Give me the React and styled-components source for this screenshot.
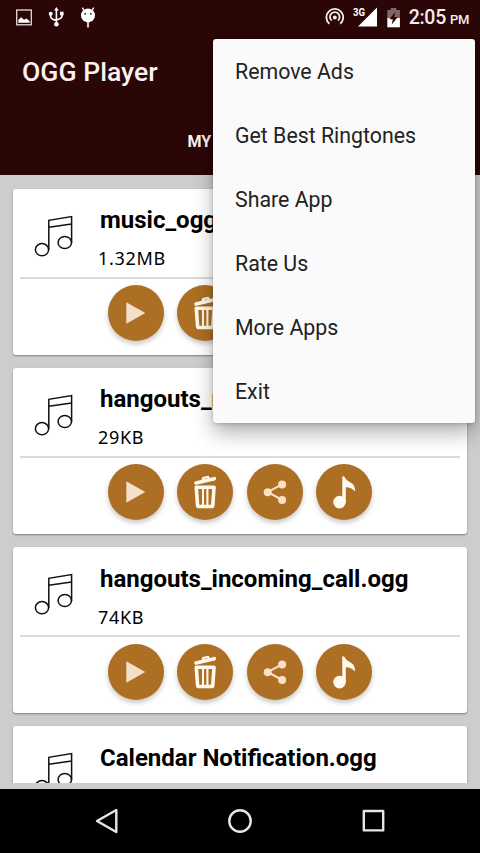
import React from "react";
import styled, { createGlobalStyle } from "styled-components";

const GlobalStyle = createGlobalStyle`
    * {
        box-sizing: border-box;
    }
    body {
        margin: 0;
        background-color: black;
        font-family: Roboto, "Liberation Sans", sans-serif;
    }
    svg {
        display: block;
        flex-shrink: 0;
    }
`;
const Container = styled.div`
    position: relative;
    display: flex;
    flex-direction: column;
    width: 480px;
    height: 853px;
    overflow: hidden;
    background-color: #cdcdcd;
`;
const StatusBar = styled.div`
    display: flex;
    align-items: center;
    height: 34px;
    padding: 0 11px 0 16px;
    background-color: #2b0607;
    color: #f6eded;
`;
const StatusIcons = styled.div`
    display: flex;
    align-items: center;
    gap: ${(props) => props.$gap}px;
    & + & {
        margin-left: auto;
    }
`;
const Clock = styled.div`
    display: flex;
    align-items: baseline;
    padding-top: 4px;
    font-size: 19.5px;
    font-weight: 500;
    letter-spacing: -0.3px;
    line-height: 30px;
    white-space: nowrap;
    span {
        margin-left: 4px;
        font-size: 13px;
    }
`;
const Header = styled.div`
    height: 74px;
    padding: 22px 22px 0;
    background-color: #2b0607;
    border-bottom: 1px solid #260405;
    color: #fbf1f0;
    font-size: 26.6px;
    font-weight: 500;
    line-height: 32px;
`;
const TabBar = styled.div`
    height: 67px;
    padding: 24px 0 0 187.5px;
    background-color: #2b0607;
    color: #fbf1f0;
    font-size: 16px;
    font-weight: 700;
    line-height: 20px;
`;
const List = styled.div`
    display: flex;
    flex-direction: column;
    gap: 13.3px;
    height: 607.5px;
    padding: 13.6px 13px 0;
    overflow: hidden;
`;
const Card = styled.div`
    flex-shrink: 0;
    height: 166px;
    padding: 0 7px;
    border-radius: 3px;
    background-color: white;
    box-shadow: 0 1px 2px rgba(0, 0, 0, 0.38);
`;
const Info = styled.div`
    display: flex;
    height: 90px;
    border-bottom: 2px solid #dadada;
    padding-left: 14px;
    svg {
        margin-top: 25px;
    }
`;
const Texts = styled.div`
    padding: 16.4px 0 0 22px;
    color: black;
`;
const FileName = styled.div`
    padding-left: 2px;
    font-size: 24px;
    font-weight: 700;
    line-height: 30px;
    white-space: nowrap;
`;
const FileSize = styled.div`
    margin-top: 10px;
    font-family: "Noto Sans", sans-serif;
    font-size: 18px;
    letter-spacing: 0.7px;
    line-height: 26px;
`;
const Actions = styled.div`
    display: flex;
    gap: 13.4px;
    padding: 6.5px 0 0 88px;
`;
const RoundButton = styled.button`
    display: flex;
    align-items: center;
    justify-content: center;
    width: 56px;
    height: 56px;
    padding: 0;
    border: none;
    border-radius: 50%;
    background-color: #ac6f23;
    box-shadow: 0 3px 5px rgba(0, 0, 0, 0.22);
`;
const NavBar = styled.div`
    display: flex;
    align-items: center;
    justify-content: space-between;
    height: 64px;
    margin-top: auto;
    padding: 0 94px;
    background-color: black;
`;
const Menu = styled.div`
    position: absolute;
    top: 39px;
    right: 5.5px;
    width: 261.5px;
    border-radius: 3px;
    background-color: #fafafa;
    box-shadow: 0 10px 20px rgba(0, 0, 0, 0.3), 0 1px 4px rgba(0, 0, 0, 0.2);
`;
const MenuItem = styled.div`
    height: 64px;
    padding-left: 22px;
    color: #222222;
    font-size: 21.33px;
    line-height: 65px;
    &:last-child {
        height: 63.5px;
    }
`;

const MusicIcon = () => (
    <svg width="42" height="46" viewBox="0 0 42 46" fill="none" stroke="#111" strokeWidth="1.5">
        <ellipse cx="8" cy="35.7" rx="6.6" ry="6.1" />
        <ellipse cx="30.8" cy="28.5" rx="6.7" ry="6.1" />
        <path d="M14.8 36V6.3L37.6 2.6V29M14.8 13.3L37.6 10" />
    </svg>
);
const PlayIcon = () => (
    <svg width="56" height="56" viewBox="0 0 56 56" fill="#f4dfcb">
        <path d="M18.3 17.3V38.8L37.3 28z" />
    </svg>
);
const TrashIcon = () => (
    <svg width="56" height="56" viewBox="0 0 56 56" fill="none" stroke="#fff8ec">
        <path d="M19 19L37.3 14.7" strokeWidth="3.6" strokeLinecap="round" />
        <path d="M25.5 16.2L26.3 14L31 13L32 14.6" strokeWidth="2.2" />
        <path d="M19.3 23.3H37L35.8 41.3Q35.7 42.5 34.4 42.5H22Q20.7 42.5 20.6 41.3z" strokeWidth="3.6" strokeLinejoin="round" />
        <path d="M26 25V41.5M30.4 25V41.5" strokeWidth="2.1" />
    </svg>
);
const ShareIcon = () => (
    <svg width="56" height="56" viewBox="0 0 56 56" fill="#fae0c4" stroke="#fae0c4">
        <path d="M35.2 20.3L20.6 28L35.2 36" fill="none" strokeWidth="2" />
        <g stroke="none">
            <circle cx="35.1" cy="20.4" r="4" />
            <circle cx="20.7" cy="28.2" r="4" />
            <circle cx="35.1" cy="36" r="4" />
        </g>
    </svg>
);
const NoteIcon = () => (
    <svg width="56" height="56" viewBox="0 0 56 56" fill="#fffaf0">
        <circle cx="23.5" cy="38.1" r="6.3" />
        <path d="M26.3 12.2Q28.7 12 29.3 14.2Q30.2 16.5 34.5 18.4Q39.8 21.2 38.8 27.4Q34.7 23 29.8 23.4V38.5H26.3z" />
    </svg>
);

const files = [
    { name: "music_ogg.ogg", size: "1.32MB" },
    { name: "hangouts_message.ogg", size: "29KB" },
    { name: "hangouts_incoming_call.ogg", size: "74KB" },
    { name: "Calendar Notification.ogg" },
];
const menuItems = ["Remove Ads", "Get Best Ringtones", "Share App", "Rate Us", "More Apps", "Exit"];

function App() {
    return (
        <Container>
            <GlobalStyle />
            <StatusBar>
                <StatusIcons $gap={16}>
                    <svg width="16" height="17" viewBox="0 0 16 17">
                        <rect x="0.7" y="1" width="14.6" height="14.8" fill="none" stroke="#e9dada" strokeWidth="1.3" />
                        <path d="M2.3 13.8V10.8L5.3 8.2L8 10.8L10.5 9.4L13.7 12.3V13.8z" fill="white" />
                    </svg>
                    <svg width="16" height="22" viewBox="0 0 16 22" fill="#fff" stroke="#fff">
                        <path d="M8.4 3V18M2.6 8V10.5Q2.6 13.2 8.4 14.4M14 7.5V10Q14 12.4 8.4 14" fill="none" strokeWidth="1.6" />
                        <path d="M8.4 1L10.7 4.5H6.1z" stroke="none" />
                        <circle cx="8.4" cy="18.3" r="2.3" stroke="none" />
                        <circle cx="2.7" cy="7.8" r="2" stroke="none" />
                        <rect x="12" y="5.7" width="3.6" height="3.6" stroke="none" />
                    </svg>
                    <svg width="16" height="22" viewBox="0 0 16 22">
                        <circle cx="8" cy="9.4" r="7" fill="white" />
                        <path d="M3.7 4L2.4 1.7M12.3 4L13.7 1.7" stroke="white" strokeWidth="1.4" />
                        <path d="M8 16V21.5" stroke="#dac5c5" strokeWidth="2.2" />
                        <circle cx="5.1" cy="7.8" r="0.9" fill="#2b0607" />
                        <circle cx="10.9" cy="7.8" r="0.9" fill="#2b0607" />
                    </svg>
                </StatusIcons>
                <StatusIcons $gap={9}>
                    <svg width="20" height="20" viewBox="-0.8 0 20 20" fill="none" stroke="#f6eded" strokeWidth="1.8">
                        <path d="M4.6 16.8A8.4 8.4 0 1 1 15.4 16.8" />
                        <path d="M6.9 13.6A4.8 4.8 0 1 1 13.1 13.6" />
                        <circle cx="10" cy="10.5" r="2" fill="#f6eded" stroke="none" />
                    </svg>
                    <svg width="24" height="26" viewBox="0 0 24 26" fill="#fff">
                        <text x="0" y="12" fontSize="11.5" fontWeight="700" textLength="12" lengthAdjust="spacingAndGlyphs">3G</text>
                        <path d="M24 3.5V22.4H5z" />
                    </svg>
                    <svg width="14" height="21" viewBox="0.2 0 14 21">
                        <path d="M1.5 3H5V1H10.5V3H14.1V11H1.5z" fill="#806668" />
                        <path d="M1.5 11H14.1V20.3H1.5z" fill="white" />
                        <path d="M9.5 5L3.5 12.3H7L5.9 17.5L12 10H8.5z" fill="#2b0607" />
                    </svg>
                    <Clock>2:05<span>PM</span></Clock>
                </StatusIcons>
            </StatusBar>
            <Header>OGG Player</Header>
            <TabBar>MY</TabBar>
            <List>
                {files.map((file) => (
                    <Card key={file.name}>
                        <Info>
                            <MusicIcon />
                            <Texts>
                                <FileName>{file.name}</FileName>
                                {file.size && <FileSize>{file.size}</FileSize>}
                            </Texts>
                        </Info>
                        <Actions>
                            <RoundButton><PlayIcon /></RoundButton>
                            <RoundButton><TrashIcon /></RoundButton>
                            <RoundButton><ShareIcon /></RoundButton>
                            <RoundButton><NoteIcon /></RoundButton>
                        </Actions>
                    </Card>
                ))}
            </List>
            <NavBar>
                <svg width="24" height="28" viewBox="0 0 24 28" fill="none" stroke="#e6e6e6" strokeWidth="2.4" strokeLinejoin="round">
                    <path d="M22.3 3V25L3 14z" />
                </svg>
                <svg width="26" height="26" viewBox="0 0 26 26" fill="none" stroke="#e6e6e6" strokeWidth="2.4">
                    <circle cx="13" cy="13" r="10.7" />
                </svg>
                <svg width="24" height="24" viewBox="0 0 24 24" fill="none" stroke="#e6e6e6" strokeWidth="2.4" strokeLinejoin="round">
                    <rect x="1.8" y="2" width="19.4" height="19.4" />
                </svg>
            </NavBar>
            <Menu>
                {menuItems.map((item) => (
                    <MenuItem key={item}>{item}</MenuItem>
                ))}
            </Menu>
        </Container>
    );
}

export default App;
